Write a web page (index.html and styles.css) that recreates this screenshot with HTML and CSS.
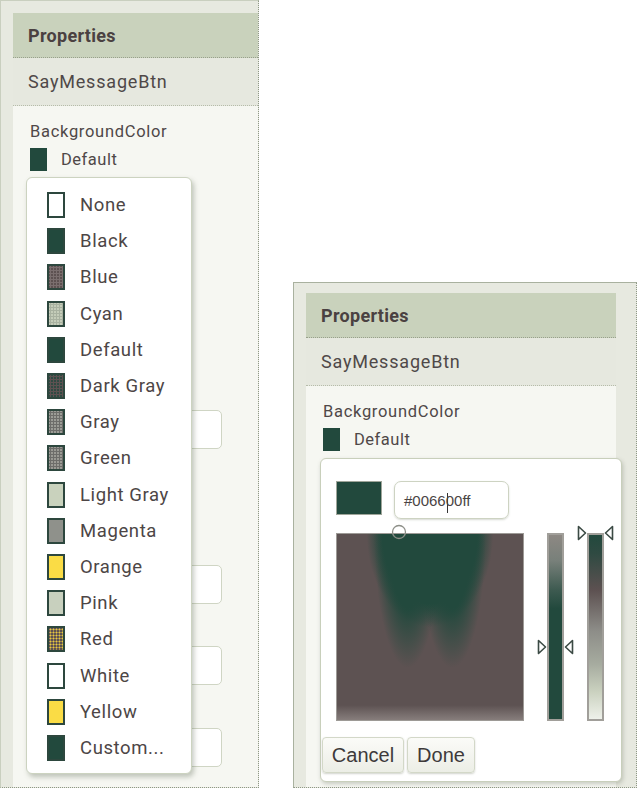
FILE: index.html
```html
<!DOCTYPE html>
<html>
<head>
<meta charset="utf-8">
<link rel="stylesheet" href="styles.css">
</head>
<body>
<div class="page">
  <section class="frame frame-left">
    <div class="panel">
      <div class="panel-head">Properties</div>
      <div class="panel-sub">SayMessageBtn</div>
      <div class="panel-body">
        <div class="prop-label">BackgroundColor</div>
        <div class="prop-value"><span class="swatch"></span><span>Default</span></div>
        <div class="field field-1"></div>
        <div class="field field-2"></div>
        <div class="field field-3"></div>
        <div class="field field-4"></div>
      </div>
    </div>
    <ul class="menu">
      <li class="item"><span class="chip c-none"></span>None</li>
      <li class="item"><span class="chip c-green"></span>Black</li>
      <li class="item"><span class="chip c-blue"></span>Blue</li>
      <li class="item"><span class="chip c-cyan"></span>Cyan</li>
      <li class="item"><span class="chip c-green"></span>Default</li>
      <li class="item"><span class="chip c-dgray"></span>Dark Gray</li>
      <li class="item"><span class="chip c-gray"></span>Gray</li>
      <li class="item"><span class="chip c-grn"></span>Green</li>
      <li class="item"><span class="chip c-lgray"></span>Light Gray</li>
      <li class="item"><span class="chip c-mag"></span>Magenta</li>
      <li class="item"><span class="chip c-yellow"></span>Orange</li>
      <li class="item"><span class="chip c-pink"></span>Pink</li>
      <li class="item"><span class="chip c-red"></span>Red</li>
      <li class="item"><span class="chip c-none"></span>White</li>
      <li class="item"><span class="chip c-yellow"></span>Yellow</li>
      <li class="item"><span class="chip c-green"></span>Custom...</li>
    </ul>
  </section>

  <section class="frame frame-right">
    <div class="panel">
      <div class="panel-head">Properties</div>
      <div class="panel-sub">SayMessageBtn</div>
      <div class="panel-body">
        <div class="prop-label">BackgroundColor</div>
        <div class="prop-value"><span class="swatch"></span><span>Default</span></div>
      </div>
    </div>
    <div class="picker">
      <div class="picker-top">
        <div class="preview"></div>
        <div class="hex"><span>#0066</span><span class="caret"></span><span>00ff</span></div>
      </div>
      <div class="picker-mid">
        <div class="sv">
          <svg class="sv-dot" width="16" height="16" viewBox="0 0 16 16"><circle cx="8" cy="8" r="6.5" fill="none" stroke="#8d8f88" stroke-width="1.3"/></svg>
        </div>
        <div class="slider hue">
          <svg class="tri tri-l" width="10" height="16" viewBox="0 0 10 16"><path d="M1.5 1.5 L8.5 8 L1.5 14.5 Z" fill="#fff" stroke="#3b4a44" stroke-width="1.6" stroke-linejoin="round"/></svg>
          <svg class="tri tri-r" width="10" height="16" viewBox="0 0 10 16"><path d="M8.5 1.5 L1.5 8 L8.5 14.5 Z" fill="#fff" stroke="#3b4a44" stroke-width="1.6" stroke-linejoin="round"/></svg>
        </div>
        <div class="slider alpha">
          <svg class="tri tri-l" width="10" height="16" viewBox="0 0 10 16"><path d="M1.5 1.5 L8.5 8 L1.5 14.5 Z" fill="#fff" stroke="#3b4a44" stroke-width="1.6" stroke-linejoin="round"/></svg>
          <svg class="tri tri-r" width="10" height="16" viewBox="0 0 10 16"><path d="M8.5 1.5 L1.5 8 L8.5 14.5 Z" fill="#fff" stroke="#3b4a44" stroke-width="1.6" stroke-linejoin="round"/></svg>
        </div>
      </div>
      <div class="picker-btns">
        <button class="btn btn-cancel">Cancel</button>
        <button class="btn btn-done">Done</button>
      </div>
    </div>
  </section>
</div>
</body>
</html>
```
FILE: styles.css
```css
* { box-sizing: border-box; }
html, body { margin: 0; padding: 0; background: #ffffff; }
body { font-family: Roboto, "Liberation Sans", sans-serif; color: #4d4646; }

.page { display: flex; align-items: flex-start; width: 637px; height: 789px; overflow: hidden; }

.frame {
  position: relative;
  background: #e7e9e0;
  border-left: 1px solid #c9cfbf;
  border-top: 1px solid #c9cfbf;
  border-right: 1px dotted #8f9886;
  border-bottom: 1px dotted #8f9886;
  display: flex;
  flex-direction: column;
}
.frame-left { width: 259px; height: 788px; padding: 12px 0 0 12px; }
.frame-right {
  width: 344px; height: 506px; margin-top: 282px; margin-left: 34px;
  padding: 10px 20px 0 12px;
  border-left-color: #a9b19f; border-top-color: #a9b19f;
}

.panel { flex: 1; display: flex; flex-direction: column; background: #f6f7f2; }
.panel-head {
  height: 45px; padding-left: 15px; display: flex; align-items: center;
  background: #c9d2bc; font-weight: 700; font-size: 18px; color: #4a4141;
  letter-spacing: 0.3px;
  border-bottom: 1px dotted #98a08c;
}
.panel-sub {
  height: 48px; padding-left: 15px; display: flex; align-items: center;
  background: #e6e8df; font-size: 18px; letter-spacing: 0.8px; color: #4f4848;
  border-bottom: 1px dotted #b6bcaa;
}
.panel-body { flex: 1; padding: 16px 0 0 17px; display: flex; flex-direction: column; }
.prop-label { font-size: 16.5px; line-height: 20px; letter-spacing: 0.7px; color: #4f4848; }
.prop-value { display: flex; align-items: center; gap: 14px; margin-top: 6px; font-size: 16.5px; letter-spacing: 0.5px; color: #4f4848; }
.swatch { width: 17px; height: 23px; background: #22493d; }

.field { width: 192px; height: 39px; background: #ffffff; border: 1px solid #cfd5c4; border-radius: 5px; }
.field-1 { margin-top: 239px; }
.field-2 { margin-top: 116px; }
.field-3 { margin-top: 42px; }
.field-4 { margin-top: 43px; }

.menu {
  position: absolute; left: 25px; top: 176px; width: 166px; height: 597px;
  margin: 0; padding: 9px 0 0 0; list-style: none;
  background: #ffffff; border: 1px solid #ccd3c0; border-radius: 6px;
  box-shadow: 2px 3px 5px rgba(90, 100, 80, 0.35);
}
.item { height: 36.2px; display: flex; align-items: center; padding-left: 20px; gap: 15px; font-size: 18.5px; letter-spacing: 0.6px; color: #4d4646; }
.chip { width: 18px; height: 26px; border: 2px solid #2d473e; background: #fff; flex: none; }
.c-none { background: #ffffff; }
.c-green { background: #22493d; }
.c-blue { background: radial-gradient(circle, #7a6e6e 1px, #5d5151 1.2px) 0 0 / 3px 3px; }
.c-cyan { background: radial-gradient(circle, #a8b1a0 1px, #c4ccb9 1.2px) 0 0 / 3px 3px; }
.c-dgray { background: radial-gradient(circle, #5d5151 1px, #2f4a42 1.2px) 0 0 / 3px 3px; }
.c-gray { background: radial-gradient(circle, #6d6d6a 1px, #9b9c96 1.2px) 0 0 / 3px 3px; }
.c-grn { background: radial-gradient(circle, #6d6d6a 1px, #9a9a94 1.2px) 0 0 / 3px 3px; }
.c-lgray { background: #c9d2bd; }
.c-mag { background: #8f918b; }
.c-yellow { background: #fadc45; }
.c-pink { background: #c8d0be; }
.c-red { background: radial-gradient(circle, #e8c840 0.9px, #5d5151 1.1px) 0 0 / 3px 3px; }

.picker {
  position: absolute; left: 26px; top: 175px; width: 302px; height: 324px;
  background: #ffffff; border: 1px solid #c8cfbb; border-radius: 6px;
  box-shadow: 1px 2px 4px rgba(90, 100, 80, 0.3);
  padding: 22px 0 0 15px;
  display: flex; flex-direction: column;
}
.picker-top { display: flex; gap: 12px; align-items: flex-start; }
.preview { width: 46px; height: 34px; background: #22493d; border: 1px solid #9fa59a; }
.hex {
  width: 115px; height: 38px; border: 1.5px solid #cdd3c2; border-radius: 7px;
  display: flex; align-items: center; padding-left: 9px;
  font-family: "Liberation Sans", Arial, sans-serif; font-size: 15px; color: #4a4444;
  box-shadow: 0 1px 2px rgba(120, 130, 110, 0.3);
}
.caret { display: inline-block; width: 1px; height: 20px; background: #333; margin: 5px -2px 0 1px; }

.picker-mid { display: flex; align-items: flex-start; margin-top: 14px; }
.sv {
  position: relative; width: 188px; height: 188px;
  border: 1px solid #9d9a96;
  background:
    linear-gradient(to top, rgba(230, 225, 220, 0.3) 0, rgba(230, 225, 220, 0) 8%),
    radial-gradient(ellipse 18% 72% at 38% 0%, #22493d 0 55%, rgba(34, 73, 61, 0) 100%),
    radial-gradient(ellipse 18% 72% at 62% 0%, #22493d 0 55%, rgba(34, 73, 61, 0) 100%),
    radial-gradient(ellipse 34% 50% at 50% 0%, #22493d 0 75%, rgba(34, 73, 61, 0) 100%),
    #5d5252;
}
.sv-dot { position: absolute; left: 54px; top: -10px; }

.slider { position: relative; width: 17px; height: 188px; border: 2px solid #a19f9a; }
.hue { margin-left: 23px; background: linear-gradient(#8d8883 0%, #78807a 14%, #3d5a50 30%, #22493d 40%, #22493d 100%); }
.alpha { margin-left: 23px; background: linear-gradient(#22493d 0%, #2f4a42 10%, #5d5151 30%, #8d8d88 52%, #a6ab9f 70%, #cad1bf 85%, #eef1ea 100%); }
.tri { position: absolute; }
.hue .tri-l { left: -12px; top: 104px; }
.hue .tri-r { left: 15px; top: 104px; }
.alpha .tri-l { left: -12px; top: -10px; }
.alpha .tri-r { left: 15px; top: -10px; }

.picker-btns { display: flex; gap: 3px; margin: 16px 0 0 -14px; }
.btn {
  height: 36px; padding: 0; border: 1px solid #d3d8c8; border-radius: 4px;
  background: linear-gradient(#fbfbf8, #eceee6);
  font-family: "Liberation Sans", Arial, sans-serif; font-size: 20px; color: #3e3a3a;
  box-shadow: 0 1px 2px rgba(120, 130, 110, 0.35);
}
.btn-cancel { width: 82px; }
.btn-done { width: 68px; }
```
